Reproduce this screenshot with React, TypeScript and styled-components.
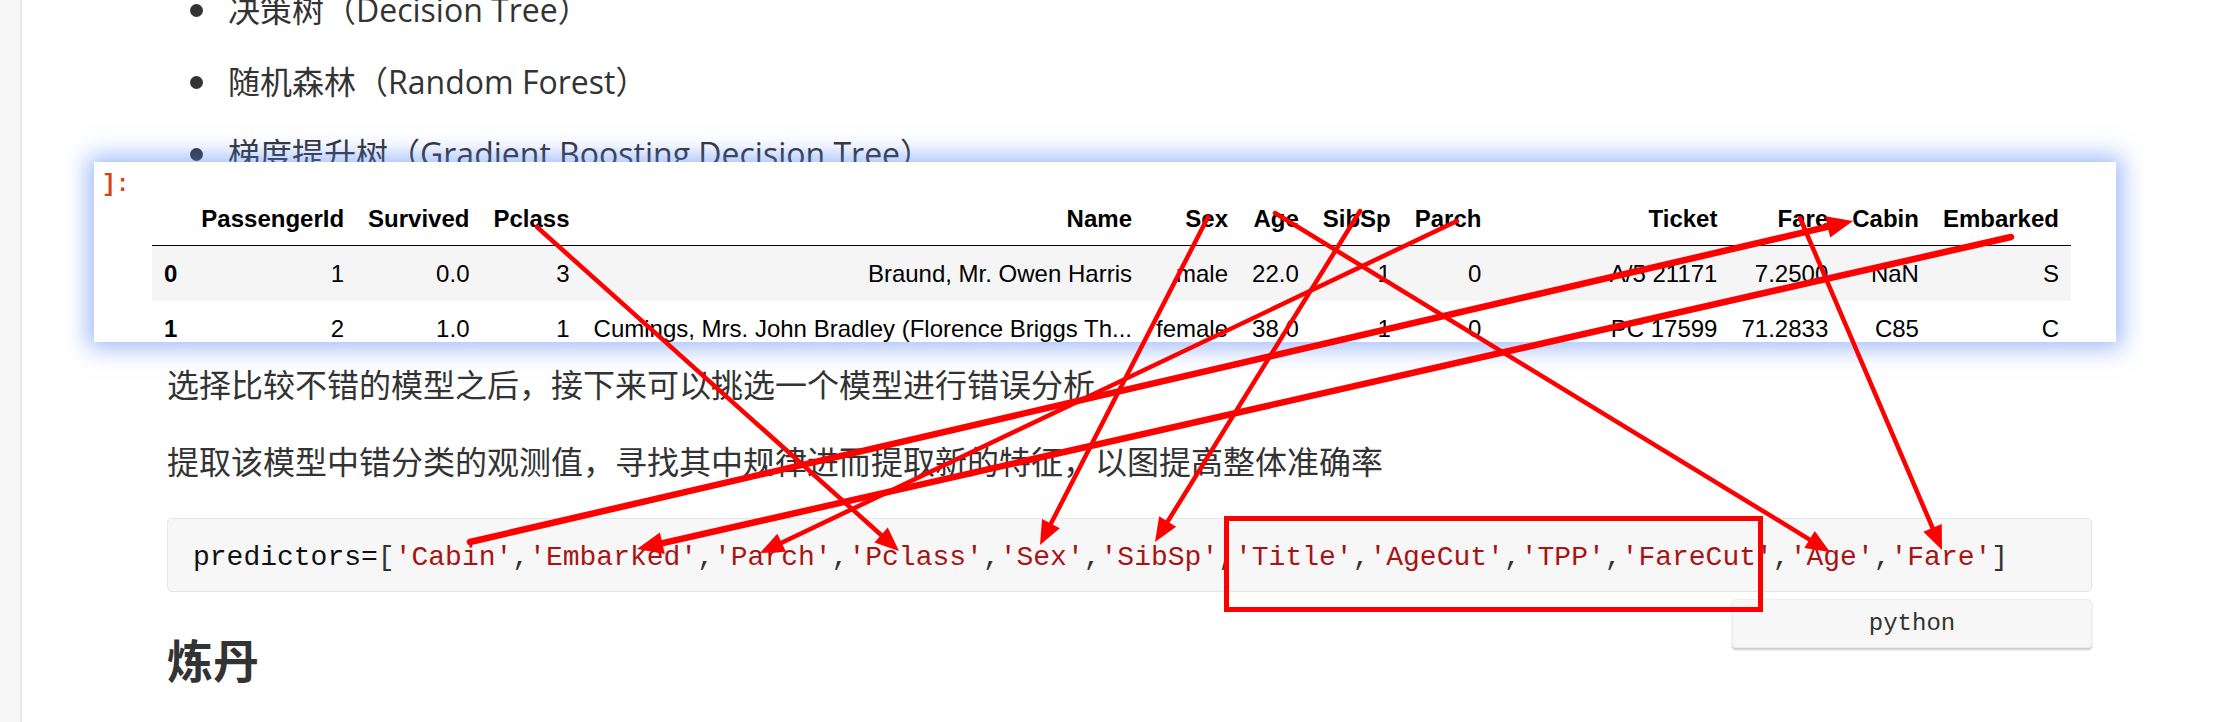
import { Fragment } from 'react';
import styled, { createGlobalStyle } from 'styled-components';

const GlobalStyle = createGlobalStyle`
    html, body {
        margin: 0;
        padding: 0;
        background: #ffffff;
        overflow: hidden;
    }
    * {
        box-sizing: border-box;
    }
`;

const Page = styled.div`
    position: relative;
    display: flex;
    width: 2238px;
    height: 722px;
    overflow: hidden;
    font-family: 'Open Sans', 'Noto Sans CJK SC', sans-serif;
    color: #333333;
`;
const Sidebar = styled.div`
    width: 22px;
    flex: none;
    background: #f7f7f7;
    border-right: 2px solid #e9e9e9;
`;
const Main = styled.div`
    flex: 1;
    padding: 0 146px 0 145px;
`;
const BulletList = styled.ul`
    list-style: none;
    margin: -16px 0 0;
    padding: 0 0 0 61px;
`;
const BulletItem = styled.li`
    position: relative;
    font-size: 32px;
    line-height: 52px;
    margin-bottom: 20px;
    &:last-child {
        margin-bottom: 0;
    }
    &::before {
        content: '';
        position: absolute;
        left: -38px;
        top: 20px;
        width: 13px;
        height: 13px;
        border-radius: 50%;
        background: #333333;
    }
`;
const OutputCard = styled.div`
    position: relative;
    z-index: 1;
    display: flex;
    height: 180px;
    margin: -18px -24px 0 -73px;
    background: #ffffff;
    overflow: hidden;
    box-shadow: 0 0 22px 6px rgba(80, 130, 250, 0.55);
`;
const Prompt = styled.div`
    width: 58px;
    flex: none;
    padding: 11px 0 0 8px;
    font-family: 'Liberation Mono', monospace;
    font-size: 23px;
    line-height: 24px;
    font-weight: 700;
    color: #d84315;
`;
const TableWrap = styled.div`
    padding-top: 29px;
`;
const DataTable = styled.table`
    border-collapse: collapse;
    border: none;
    font-family: 'Liberation Sans', Arial, sans-serif;
    font-size: 24px;
    color: #000000;
    white-space: nowrap;
`;
const HeadCell = styled.th<{ $minWidth?: number }>`
    text-align: right;
    font-weight: 700;
    padding: 12px 12px 11px;
    line-height: 31px;
    border-bottom: 1.5px solid #000000;
    ${(p) => (p.$minWidth ? `width: ${p.$minWidth}px; min-width: ${p.$minWidth}px;` : '')}
`;
const Row = styled.tr<{ $striped: boolean }>`
    background: ${(p) => (p.$striped ? '#f5f5f5' : '#ffffff')};
`;
const Cell = styled.td<{ $index?: boolean }>`
    text-align: ${(p) => (p.$index ? 'left' : 'right')};
    padding: 12px;
    line-height: 31px;
    font-weight: ${(p) => (p.$index ? 700 : 400)};
`;
const Paragraph = styled.p<{ $gap: number }>`
    margin: ${(p) => p.$gap}px 0 0;
    font-size: 32px;
    line-height: 52px;
    color: #333333;
`;
const CodeWrap = styled.div`
    position: relative;
    margin-top: 30px;
`;
const CodeBlock = styled.pre`
    margin: 0;
    height: 74px;
    display: flex;
    align-items: center;
    padding: 4px 0 0 25px;
    background: #f7f7f7;
    border: 1px solid #e4e7ea;
    border-radius: 5px;
    font-family: 'Liberation Mono', 'Courier New', monospace;
    font-size: 28px;
    color: #111111;
`;
const Str = styled.span`
    color: #a81414;
`;
const Punct = styled.span`
    color: #333333;
`;
const LangTag = styled.div`
    position: absolute;
    top: calc(100% + 7px);
    right: 0;
    width: 360px;
    height: 49px;
    display: flex;
    align-items: center;
    justify-content: center;
    background: #f7f7f7;
    border: 1px solid #eceeef;
    border-radius: 4px;
    box-shadow: 0 2px 2px rgba(0, 0, 0, 0.2);
    font-family: 'Liberation Mono', 'Courier New', monospace;
    font-size: 24px;
    color: #333333;
`;
const Heading = styled.h2`
    margin: 45px 0 0;
    font-size: 46px;
    line-height: 46px;
    font-weight: 700;
    color: #333333;
`;
const Overlay = styled.svg`
    position: absolute;
    top: 0;
    left: 0;
    z-index: 5;
    pointer-events: none;
`;

const columns: { label: string; minWidth?: number }[] = [
    { label: '' },
    { label: 'PassengerId' },
    { label: 'Survived' },
    { label: 'Pclass' },
    { label: 'Name' },
    { label: 'Sex' },
    { label: 'Age' },
    { label: 'SibSp' },
    { label: 'Parch' },
    { label: 'Ticket', minWidth: 236 },
    { label: 'Fare' },
    { label: 'Cabin' },
    { label: 'Embarked' }
];
const rows = [
    ['0', '1', '0.0', '3', 'Braund, Mr. Owen Harris', 'male', '22.0', '1', '0', 'A/5 21171', '7.2500', 'NaN', 'S'],
    ['1', '2', '1.0', '1', 'Cumings, Mrs. John Bradley (Florence Briggs Th...', 'female', '38.0', '1', '0', 'PC 17599', '71.2833', 'C85', 'C']
];
const predictors = ['Cabin', 'Embarked', 'Parch', 'Pclass', 'Sex', 'SibSp', 'Title', 'AgeCut', 'TPP', 'FareCut', 'Age', 'Fare'];

interface Arrow {
    x1: number;
    y1: number;
    x2: number;
    y2: number;
    w: number;
}

// hand-drawn annotation arrows, start -> tip
const arrows: Arrow[] = [
    { x1: 537, y1: 227, x2: 899, y2: 551, w: 4.5 },
    { x1: 1208, y1: 217, x2: 1040, y2: 545, w: 4.5 },
    { x1: 1275, y1: 213, x2: 1830, y2: 552, w: 4.5 },
    { x1: 1360, y1: 211, x2: 1155, y2: 542, w: 4.5 },
    { x1: 1457, y1: 221, x2: 760, y2: 553, w: 4.5 },
    { x1: 470, y1: 542, x2: 1853, y2: 221, w: 6.5 },
    { x1: 2011, y1: 237, x2: 637, y2: 549, w: 6.5 },
    { x1: 1800, y1: 218, x2: 1942, y2: 550, w: 4.5 }
];

function ArrowShape({ a }: { a: Arrow }) {
    const dx = a.x2 - a.x1;
    const dy = a.y2 - a.y1;
    const len = Math.hypot(dx, dy);
    const ux = dx / len;
    const uy = dy / len;
    const headLen = a.w > 5 ? 26 : 24;
    const half = a.w > 5 ? 11 : 10;
    const bx = a.x2 - ux * headLen;
    const by = a.y2 - uy * headLen;
    const points = [
        `${a.x2},${a.y2}`,
        `${bx - uy * half},${by + ux * half}`,
        `${bx + uy * half},${by - ux * half}`
    ].join(' ');
    return (
        <g>
            <line x1={a.x1} y1={a.y1} x2={bx + ux * 3} y2={by + uy * 3} stroke="#ff0000" strokeWidth={a.w} strokeLinecap="round" />
            <polygon points={points} fill="#ff0000" />
        </g>
    );
}

function App() {
    return (
        <Fragment>
            <GlobalStyle />
            <Page>
                <Sidebar />
                <Main>
                    <BulletList>
                        <BulletItem>决策树（Decision Tree）</BulletItem>
                        <BulletItem>随机森林（Random Forest）</BulletItem>
                        <BulletItem>梯度提升树（Gradient Boosting Decision Tree）</BulletItem>
                    </BulletList>
                    <OutputCard>
                        <Prompt>]:</Prompt>
                        <TableWrap>
                            <DataTable>
                                <thead>
                                    <tr>
                                        {columns.map((c, i) => (
                                            <HeadCell key={i} $minWidth={c.minWidth}>
                                                {c.label}
                                            </HeadCell>
                                        ))}
                                    </tr>
                                </thead>
                                <tbody>
                                    {rows.map((r, ri) => (
                                        <Row key={ri} $striped={ri % 2 === 0}>
                                            {r.map((v, ci) => (
                                                <Cell key={ci} $index={ci === 0}>
                                                    {v}
                                                </Cell>
                                            ))}
                                        </Row>
                                    ))}
                                </tbody>
                            </DataTable>
                        </TableWrap>
                    </OutputCard>
                    <Paragraph $gap={17}>选择比较不错的模型之后，接下来可以挑选一个模型进行错误分析</Paragraph>
                    <Paragraph $gap={25}>提取该模型中错分类的观测值，寻找其中规律进而提取新的特征，以图提高整体准确率</Paragraph>
                    <CodeWrap>
                        <CodeBlock>
                            predictors=<Punct>[</Punct>
                            {predictors.map((p, i) => (
                                <Fragment key={p}>
                                    <Str>'{p}'</Str>
                                    <Punct>{i < predictors.length - 1 ? ',' : ']'}</Punct>
                                </Fragment>
                            ))}
                        </CodeBlock>
                        <LangTag>python</LangTag>
                    </CodeWrap>
                    <Heading>炼丹</Heading>
                </Main>
                <Overlay width="2238" height="722" viewBox="0 0 2238 722">
                    {arrows.map((a, i) => (
                        <ArrowShape key={i} a={a} />
                    ))}
                    <rect x="1226.5" y="518.5" width="534" height="91" fill="none" stroke="#ff0000" strokeWidth="5" />
                </Overlay>
            </Page>
        </Fragment>
    );
}

export default App;
